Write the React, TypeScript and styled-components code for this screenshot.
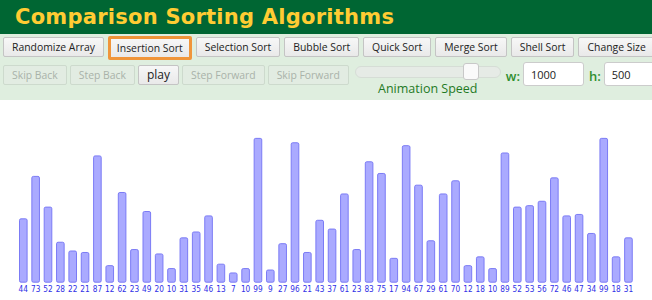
import React from "react";
import styled, { createGlobalStyle } from "styled-components";

const Global = createGlobalStyle`
  html, body { margin: 0; padding: 0; background: #ffffff; overflow: hidden; }
  body { font-family: "Open Sans", "Noto Sans", sans-serif; }
`;

const Page = styled.div`
  width: 652px;
  height: 300px;
  display: flex;
  flex-direction: column;
  background: #ffffff;
  overflow: hidden;
`;

const Header = styled.header`
  height: 34px;
  background: #006633;
  display: flex;
  align-items: center;
  padding-left: 15px;
  box-sizing: border-box;
`;

const Title = styled.h1`
  margin: 0;
  font-family: "DejaVu Sans", Verdana, sans-serif;
  font-weight: bold;
  font-size: 21px;
  color: #ffcc33;
  letter-spacing: 0.25px;
`;

const Toolbar = styled.div`
  height: 66px;
  background: #dfeedf;
  display: flex;
  flex-direction: column;
  padding: 2px 0 0 3px;
  box-sizing: border-box;
  overflow: hidden;
`;

const Row = styled.div<{ $top?: number; $gap?: number }>`
  display: flex;
  flex-wrap: nowrap;
  align-items: flex-start;
  gap: ${(p) => p.$gap ?? 3}px;
  margin-top: ${(p) => p.$top ?? 0}px;
  white-space: nowrap;
`;

const Button = styled.button<{ $selected?: boolean; $disabled?: boolean }>`
  height: ${(p) => (p.$selected ? 24 : 20)}px;
  margin-top: ${(p) => (p.$selected ? 0 : 1)}px;
  padding: 0 ${(p) => (p.$selected ? 6 : 8)}px;
  box-sizing: border-box;
  font-family: "Open Sans", "Noto Sans", sans-serif;
  font-size: 10.4px;
  line-height: 18px;
  border-radius: 2px;
  border: ${(p) =>
    p.$selected ? "3px solid #f0953a" : p.$disabled ? "1px solid #cddacd" : "1px solid #c4c4c4"};
  background: ${(p) =>
    p.$disabled ? "#e2ece2" : "linear-gradient(#f7f7f7, #e9e9e9)"};
  color: ${(p) => (p.$disabled ? "#a9b2a9" : "#222222")};
  cursor: default;
  flex: none;
`;

const PlayButton = styled(Button)`
  font-size: 12px;
  padding: 0 8px;
`;

const SliderGroup = styled.div`
  display: flex;
  flex-direction: column;
  align-items: center;
  margin-left: 3px;
  width: 146px;
  flex: none;
`;

const Track = styled.div`
  position: relative;
  margin-top: 2px;
  width: 146px;
  height: 12px;
  box-sizing: border-box;
  border-radius: 6px;
  background: #e6ebe6;
  border: 1px solid #d6ddd6;
`;

const Thumb = styled.div`
  position: absolute;
  left: 107px;
  top: -4px;
  width: 16px;
  height: 17px;
  box-sizing: border-box;
  border-radius: 3px;
  background: #fafafa;
  border: 1px solid #c8c8c8;
`;

const SpeedLabel = styled.div`
  margin-top: 3px;
  font-size: 12.5px;
  color: #1f7a1f;
  line-height: 16px;
`;

const FieldLabel = styled.label`
  font-size: 13px;
  font-weight: 600;
  color: #2f8f2f;
  line-height: 24px;
  margin-left: 2px;
  flex: none;
`;

const Input = styled.input`
  width: 61px;
  height: 24px;
  margin-top: -2px;
  box-sizing: border-box;
  border: 1px solid #cccccc;
  border-radius: 3px;
  background: #ffffff;
  padding: 0 0 0 7px;
  font-family: "Open Sans", "Noto Sans", sans-serif;
  font-size: 11px;
  color: #222;
  flex: none;
  outline: none;
`;

const Chart = styled.svg`
  display: block;
  width: 652px;
  height: 200px;
`;

const values = [
  44, 73, 52, 28, 22, 21, 87, 12, 62, 23, 49, 20, 10, 31, 35, 46, 13, 7, 10, 99,
  9, 27, 96, 21, 43, 37, 61, 23, 83, 75, 17, 94, 67, 29, 61, 70, 12, 18, 10, 89,
  52, 53, 56, 72, 46, 47, 34, 99, 18, 31,
];

const sorts = [
  "Randomize Array",
  "Insertion Sort",
  "Selection Sort",
  "Bubble Sort",
  "Quick Sort",
  "Merge Sort",
  "Shell Sort",
  "Change Size",
];

function BarChart() {
  const x0 = 19;
  const pitch = 12.35;
  const w = 8.6;
  const base = 182.7;
  const k = 1.463;
  return (
    <Chart viewBox="0 0 652 200">
      {values.map((v, i) => {
        const h = v * k;
        const x = x0 + i * pitch;
        return (
          <g key={i}>
            <rect
              x={x + 0.5}
              y={base - h + 0.5}
              width={w - 1}
              height={h - 1}
              rx={1.5}
              fill="#aaaaff"
              stroke="#7b7bf5"
              strokeWidth={1}
            />
            <text
              x={x + w / 2}
              y={192.3}
              textAnchor="middle"
              fontFamily="'DejaVu Sans Condensed', 'DejaVu Sans', sans-serif"
              fontSize={8.2}
              fill="#2f2fe6"
            >
              {v}
            </text>
          </g>
        );
      })}
    </Chart>
  );
}

export default function App() {
  return (
    <Page>
      <Global />
      <Header>
        <Title>Comparison Sorting Algorithms</Title>
      </Header>
      <Toolbar>
        <Row $gap={4}>
          {sorts.map((s) => (
            <Button key={s} $selected={s === "Insertion Sort"}>
              {s}
            </Button>
          ))}
        </Row>
        <Row $top={4}>
          <Button $disabled>Skip Back</Button>
          <Button $disabled>Step Back</Button>
          <PlayButton>play</PlayButton>
          <Button $disabled>Step Forward</Button>
          <Button $disabled>Skip Forward</Button>
          <SliderGroup>
            <Track>
              <Thumb />
            </Track>
            <SpeedLabel>Animation Speed</SpeedLabel>
          </SliderGroup>
          <FieldLabel>w:</FieldLabel>
          <Input defaultValue="1000" />
          <FieldLabel>h:</FieldLabel>
          <Input defaultValue="500" />
        </Row>
      </Toolbar>
      <BarChart />
    </Page>
  );
}
